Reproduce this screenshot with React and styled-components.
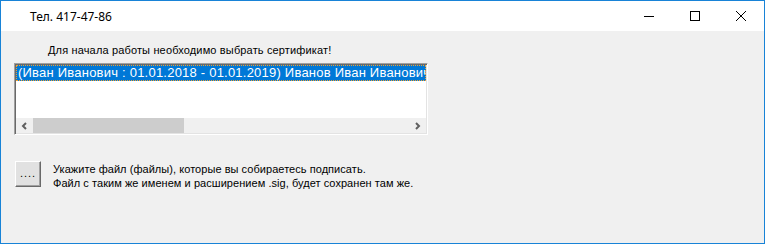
import React from "react";
import styled, { createGlobalStyle } from "styled-components";

const GlobalStyle = createGlobalStyle`
  html, body {
    margin: 0;
    padding: 0;
    background: #ffffff;
  }
`;

function WindowButtons() {
  return (
    <Controls>
      <CtrlButton>
        <svg width="10" height="10" viewBox="0 0 10 10">
          <path d="M0 5.5 H10" stroke="#000" strokeWidth="1" />
        </svg>
      </CtrlButton>
      <CtrlButton>
        <svg width="10" height="10" viewBox="0 0 10 10">
          <rect x="0.5" y="0.5" width="9" height="9" fill="none" stroke="#000" strokeWidth="1" />
        </svg>
      </CtrlButton>
      <CtrlButton>
        <svg width="10" height="10" viewBox="0 0 10 10">
          <path d="M0 0 L10 10 M10 0 L0 10" stroke="#000" strokeWidth="1" />
        </svg>
      </CtrlButton>
    </Controls>
  );
}

function ScrollArrow({ dir }) {
  const d = dir === "left" ? "M5 1 L2 4 L5 7" : "M2 1 L5 4 L2 7";
  return (
    <Arrow>
      <svg width="7" height="8" viewBox="0 0 7 8">
        <path d={d} fill="none" stroke="#606060" strokeWidth="2" />
      </svg>
    </Arrow>
  );
}

function App() {
  return (
    <>
      <GlobalStyle />
      <Window>
        <TitleBar>
          <Title>Тел. 417-47-86</Title>
          <WindowButtons />
        </TitleBar>
        <Body>
          <Prompt>Для начала работы необходимо выбрать сертификат!</Prompt>
          <ListBox>
            <Items>
              <Item selected>
                (Иван Иванович : 01.01.2018 - 01.01.2019) Иванов Иван Иванович
              </Item>
            </Items>
            <HScroll>
              <ScrollArrow dir="left" />
              <Track>
                <Thumb />
              </Track>
              <ScrollArrow dir="right" />
            </HScroll>
          </ListBox>
          <FileRow>
            <BrowseButton>....</BrowseButton>
            <Hint>
              Укажите файл (файлы), которые вы собираетесь подписать.
              <br />
              Файл с таким же именем и расширением .sig, будет сохранен там же.
            </Hint>
          </FileRow>
        </Body>
      </Window>
    </>
  );
}

const Window = styled.div`
  width: 765px;
  height: 244px;
  box-sizing: border-box;
  border: 1px solid #1883d7;
  display: flex;
  flex-direction: column;
  background: #f0f0f0;
`;

const TitleBar = styled.div`
  height: 30px;
  background: #ffffff;
  display: flex;
  align-items: center;
  justify-content: space-between;
`;

const Title = styled.div`
  padding-left: 29px;
  font-family: "Noto Sans", "Open Sans", sans-serif;
  font-size: 12px;
  color: #000;
`;

const Controls = styled.div`
  display: flex;
  height: 100%;
`;

const CtrlButton = styled.div`
  width: 46px;
  height: 100%;
  display: flex;
  align-items: center;
  justify-content: center;
`;

const Body = styled.div`
  flex: 1;
  padding: 13px 0 0 13px;
  font-family: "Liberation Sans", Arial, sans-serif;
  font-size: 11px;
  color: #000;
`;

const Prompt = styled.div`
  padding-left: 34px;
  height: 19px;
  line-height: 13px;
  letter-spacing: 0.15px;
`;

const ListBox = styled.div`
  width: 414px;
  height: 72px;
  box-sizing: border-box;
  border-top: 1px solid #a0a0a0;
  border-left: 1px solid #a0a0a0;
  border-right: 1px solid #ffffff;
  border-bottom: 1px solid #ffffff;
  box-shadow: inset 1px 1px 0 #696969, inset -1px -1px 0 #e3e3e3;
  background: #ffffff;
  display: flex;
  flex-direction: column;
  padding: 1px;
`;

const Items = styled.div`
  flex: 1;
  overflow: hidden;
`;

const Item = styled.div`
  height: 16px;
  line-height: 15px;
  padding-left: 2px;
  white-space: nowrap;
  overflow: hidden;
  box-sizing: border-box;
  background: ${(p) => (p.selected ? "#0078d7" : "transparent")};
  color: ${(p) => (p.selected ? "#ffffff" : "#000")};
  outline: ${(p) => (p.selected ? "1px dotted #f0a030" : "none")};
  outline-offset: -1px;
  font-size: 13px;
  letter-spacing: 0.22px;
`;

const HScroll = styled.div`
  height: 15px;
  display: flex;
  background: #f0f0f0;
`;

const Arrow = styled.div`
  width: 17px;
  display: flex;
  align-items: center;
  justify-content: center;
`;

const Track = styled.div`
  flex: 1;
  display: flex;
  align-items: stretch;
`;

const Thumb = styled.div`
  width: 151px;
  background: #cdcdcd;
`;

const FileRow = styled.div`
  display: flex;
  align-items: flex-start;
  margin-top: 26px;
  gap: 12px;
`;

const BrowseButton = styled.div`
  width: 26px;
  height: 26px;
  box-sizing: border-box;
  margin-left: 1px;
  background: #e1e1e1;
  border-top: 1px solid #ffffff;
  border-left: 1px solid #ffffff;
  border-right: 1px solid #696969;
  border-bottom: 1px solid #696969;
  box-shadow: inset -1px -1px 0 #a0a0a0;
  display: flex;
  align-items: center;
  justify-content: center;
  font-size: 11px;
  letter-spacing: 1px;
  line-height: 1;
  padding-bottom: 2px;
`;

const Hint = styled.div`
  line-height: 14px;
  padding-top: 1px;
  letter-spacing: 0.05px;
`;

export default App;
